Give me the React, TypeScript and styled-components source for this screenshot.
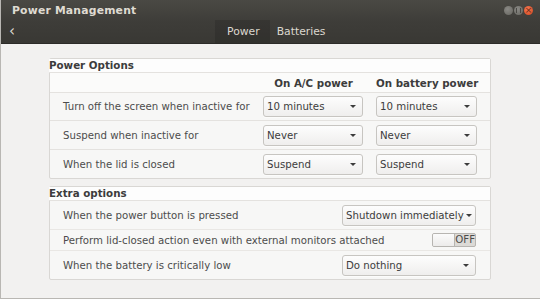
import styled, { createGlobalStyle } from 'styled-components';
import React from 'react';

const GlobalStyle = createGlobalStyle`
  html, body {
    margin: 0;
    padding: 0;
    background: #f2f1f0;
  }
  body {
    font-family: "DejaVu Sans", "Liberation Sans", sans-serif;
    font-size: 10.2px;
    color: #4c4c4c;
  }
`;

type ComboProps = { value: string; width: number };

function Combo({ value, width }: ComboProps) {
  return (
    <ComboBox style={{ width }}>
      <ComboText>{value}</ComboText>
      <Arrow />
    </ComboBox>
  );
}

function Switch() {
  return (
    <SwitchTrack>
      <SwitchKnob />
      <SwitchLabel>OFF</SwitchLabel>
    </SwitchTrack>
  );
}

export default function App() {
  return (
    <Window>
      <GlobalStyle />
      <Header>
        <TitleRow>
          <Title>Power Management</Title>
          <WindowButtons>
            <WinButton />
            <WinButton>
              <PauseGlyph />
            </WinButton>
            <WinButton $close>×</WinButton>
          </WindowButtons>
        </TitleRow>
        <TabRow>
          <BackButton>‹</BackButton>
          <Tabs>
            <Tab $active>Power</Tab>
            <Tab>Batteries</Tab>
          </Tabs>
        </TabRow>
      </Header>

      <Content>
        <Frame>
          <FrameHeading>Power Options</FrameHeading>
          <GridRow $height={20} $header>
            <span />
            <ColumnTitle>On A/C power</ColumnTitle>
            <ColumnTitle>On battery power</ColumnTitle>
          </GridRow>
          <GridRow $height={28}>
            <Label>Turn off the screen when inactive for</Label>
            <Combo value="10 minutes" width={100} />
            <Combo value="10 minutes" width={101} />
          </GridRow>
          <GridRow $height={29}>
            <Label>Suspend when inactive for</Label>
            <Combo value="Never" width={100} />
            <Combo value="Never" width={101} />
          </GridRow>
          <GridRow $height={28} $last>
            <Label>When the lid is closed</Label>
            <Combo value="Suspend" width={100} />
            <Combo value="Suspend" width={101} />
          </GridRow>
        </Frame>

        <Frame>
          <FrameHeading>Extra options</FrameHeading>
          <OptionRow $height={29}>
            <Label>When the power button is pressed</Label>
            <Combo value="Shutdown immediately" width={134} />
          </OptionRow>
          <OptionRow $height={21}>
            <Label>Perform lid-closed action even with external monitors attached</Label>
            <Switch />
          </OptionRow>
          <OptionRow $height={28} $last>
            <Label>When the battery is critically low</Label>
            <Combo value="Do nothing" width={134} />
          </OptionRow>
        </Frame>
      </Content>
    </Window>
  );
}

const Window = styled.div`
  width: 540px;
  height: 299px;
  box-sizing: border-box;
  display: flex;
  flex-direction: column;
  background: #f2f1f0;
  border-left: 1px solid #b9b7b3;
  border-bottom: 1px solid #b9b7b3;
  overflow: hidden;
`;

const Header = styled.div`
  height: 44px;
  flex-shrink: 0;
  display: flex;
  flex-direction: column;
  background: linear-gradient(#4a4944, #3e3d39 50%, #393834);
  border-bottom: 1px solid #2c2b28;
  box-sizing: border-box;
`;

const TitleRow = styled.div`
  height: 20px;
  display: flex;
  align-items: center;
  justify-content: space-between;
  padding: 0 7px 0 11px;
`;

const Title = styled.div`
  font-weight: bold;
  font-size: 10.8px;
  color: #dfdbd2;
  letter-spacing: 0.2px;
`;

const WindowButtons = styled.div`
  display: flex;
  gap: 1px;
  margin-top: 1px;
`;

const WinButton = styled.div<{ $close?: boolean }>`
  width: 9px;
  height: 9px;
  border-radius: 50%;
  background: ${(p) => (p.$close ? 'radial-gradient(circle at 40% 35%, #f47a55, #d3451d)' : 'radial-gradient(circle at 40% 35%, #8a8985, #66655f)')};
  color: #6b2a14;
  font-size: 9px;
  line-height: 9px;
  display: flex;
  align-items: center;
  justify-content: center;
  overflow: hidden;
`;

const PauseGlyph = styled.div`
  width: 3px;
  height: 5px;
  border-left: 1px solid #4a4944;
  border-right: 1px solid #4a4944;
`;

const TabRow = styled.div`
  flex: 1;
  display: flex;
  align-items: stretch;
  position: relative;
`;

const BackButton = styled.div`
  position: absolute;
  left: 8px;
  top: 2px;
  font-size: 15px;
  color: #dfdbd2;
`;

const Tabs = styled.div`
  display: flex;
  margin-left: 214px;
`;

const Tab = styled.div<{ $active?: boolean }>`
  display: flex;
  align-items: center;
  padding: 0 ${(p) => (p.$active ? '10px' : '7px')} 0 ${(p) => (p.$active ? '12px' : '7px')};
  font-size: 10.8px;
  color: #dcd8cf;
  background: ${(p) => (p.$active ? 'rgba(0, 0, 0, 0.12)' : 'transparent')};
`;

const Content = styled.div`
  flex: 1;
  display: flex;
  flex-direction: column;
  gap: 7px;
  padding: 14px 49px 0 48px;
`;

const Frame = styled.div`
  border: 1px solid #d9d7d4;
  border-radius: 2px;
  background: #f7f7f6;
  display: flex;
  flex-direction: column;
`;

const FrameHeading = styled.div`
  height: 14px;
  box-sizing: border-box;
  line-height: 13px;
  font-weight: bold;
  font-size: 10.3px;
  color: #3c3c3c;
  background: #fdfdfd;
  border-bottom: 1px solid #e4e2df;
  margin-left: -1px;
`;

const GridRow = styled.div<{ $height: number; $header?: boolean; $last?: boolean }>`
  display: grid;
  grid-template-columns: 200px 113px 101px;
  align-items: center;
  box-sizing: border-box;
  height: ${(p) => p.$height}px;
  padding-left: 13px;
  border-bottom: ${(p) => (p.$last ? 'none' : '1px solid #e4e2df')};
  background: ${(p) => (p.$header ? '#fbfbfa' : 'transparent')};
`;

const ColumnTitle = styled.div`
  font-weight: bold;
  font-size: 10.3px;
  color: #3c3c3c;
  text-align: center;
  white-space: nowrap;
  width: 101px;
`;

const OptionRow = styled.div<{ $height: number; $last?: boolean }>`
  display: flex;
  align-items: center;
  justify-content: space-between;
  box-sizing: border-box;
  height: ${(p) => p.$height}px;
  padding: 0 14px 0 13px;
  border-bottom: ${(p) => (p.$last ? 'none' : '1px solid #e9e7e4')};
`;

const Label = styled.div`
  white-space: nowrap;
  color: #4c4c4c;
`;

const ComboBox = styled.div`
  height: 21px;
  box-sizing: border-box;
  display: flex;
  align-items: center;
  justify-content: space-between;
  padding: 0 6px 0 3px;
  border: 1px solid #c7c5c1;
  border-radius: 3px;
  background: linear-gradient(#fdfdfd, #efeeed);
  box-shadow: 0 1px 0 rgba(255, 255, 255, 0.6);
`;

const ComboText = styled.span`
  color: #3c3c3c;
  white-space: nowrap;
`;

const Arrow = styled.span`
  flex-shrink: 0;
  width: 0;
  height: 0;
  border-left: 3px solid transparent;
  border-right: 3px solid transparent;
  border-top: 3px solid #3c3c3c;
  margin-left: 2px;
`;

const SwitchTrack = styled.div`
  width: 44px;
  height: 14px;
  box-sizing: border-box;
  display: flex;
  align-items: stretch;
  border: 1px solid #b7b5b1;
  border-radius: 2px;
  background: #dcdad6;
  overflow: hidden;
`;

const SwitchKnob = styled.div`
  width: 22px;
  background: linear-gradient(#fbfbfb, #ecebea);
  border-right: 1px solid #b7b5b1;
`;

const SwitchLabel = styled.div`
  flex: 1;
  font-size: 10.2px;
  line-height: 12px;
  text-align: center;
  color: #4c4c4c;
`;
